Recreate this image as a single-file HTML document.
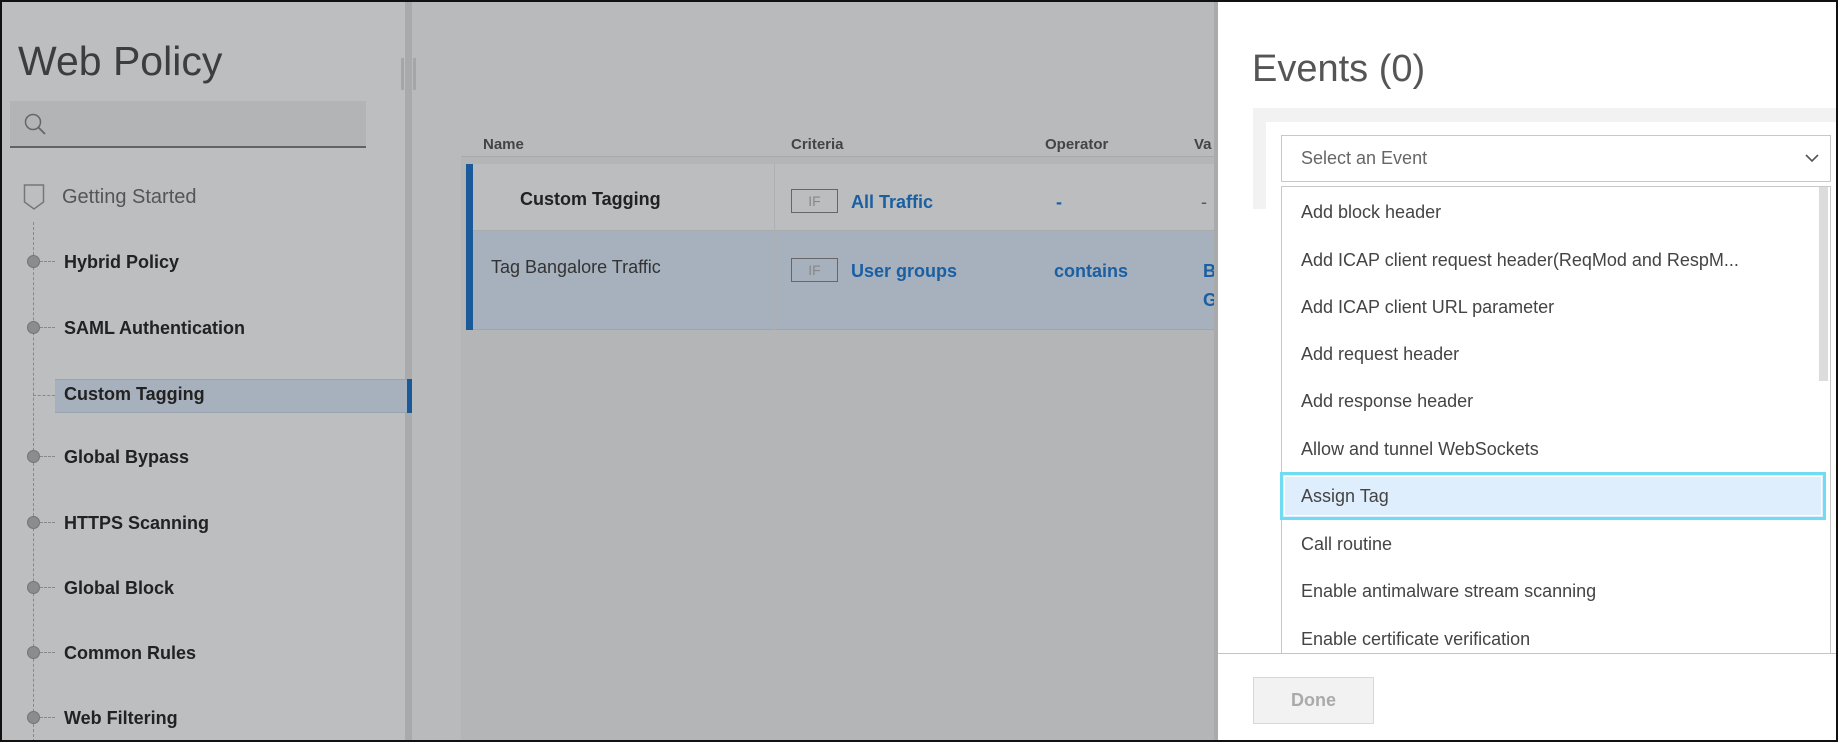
<!DOCTYPE html>
<html><head><meta charset="utf-8"><style>
*{margin:0;padding:0;box-sizing:border-box}
body{width:1838px;height:742px;overflow:hidden;position:relative;font-family:"Liberation Sans",sans-serif;background:#b9babb}
.a{position:absolute;white-space:nowrap}
.frame{position:absolute;left:0;top:0;width:1838px;height:742px;border:2px solid #111;z-index:50;pointer-events:none}
.item{font-size:18px;font-weight:bold;color:#222;left:64px}
.dot{position:absolute;left:27px;width:13px;height:13px;border-radius:50%;background:#8b8c8d;border:1px solid #747576}
.hd{position:absolute;left:40px;width:15px;border-top:1px dashed #888}
.li{position:absolute;left:1301px;font-size:18px;color:#444}
.th{position:absolute;top:136px;font-size:15px;font-weight:bold;color:#444}
.if{position:absolute;left:791px;width:47px;height:24px;border:1px solid #666;color:#888;font-size:14px;text-align:center;line-height:22px}
.bl{position:absolute;color:#1b5fa3;font-size:18px;font-weight:bold}
</style></head><body>
<div class="frame"></div>
<div class="a" style="left:0;top:0;width:405px;height:742px;background:#bdbebf"></div>
<div class="a" style="left:405px;top:0;width:7px;height:742px;background:#a9aaab"></div>
<div class="a" style="left:401px;top:58px;width:3px;height:32px;background:#a5a6a7"></div>
<div class="a" style="left:413px;top:58px;width:3px;height:32px;background:#a5a6a7"></div>
<div class="a" style="left:18px;top:38px;font-size:41px;color:#3c3d3e;font-weight:300">Web Policy</div>
<div class="a" style="left:10px;top:101px;width:356px;height:47px;background:#b3b4b5;border-bottom:2px solid #626364"></div>
<svg class="a" style="left:22px;top:111px" width="28" height="28" viewBox="0 0 28 28"><circle cx="11" cy="11" r="7.5" fill="none" stroke="#666" stroke-width="1.5"/><line x1="16.5" y1="16.5" x2="23" y2="23" stroke="#666" stroke-width="1.8"/></svg>
<div class="a" style="left:33px;top:222px;height:520px;border-left:1px dashed #888"></div>
<svg class="a" style="left:23px;top:183px" width="22" height="28" viewBox="0 0 22 28"><path d="M1.5 2 L20.5 2 L20.5 19 L11 26 L1.5 19 Z" fill="none" stroke="#777" stroke-width="1.5"/></svg>
<div class="a" style="left:62px;top:186px;font-size:20px;color:#555">Getting Started</div>
<div class="dot" style="top:255px"></div><div class="hd" style="top:261px"></div><div class="a item" style="top:252px">Hybrid Policy</div>
<div class="dot" style="top:321px"></div><div class="hd" style="top:327px"></div><div class="a item" style="top:318px">SAML Authentication</div>
<div class="a" style="left:33px;top:395px;width:22px;border-top:1px dashed #888"></div>
<div class="a" style="left:55px;top:379px;width:357px;height:34px;background:#a7b1bd;border-top:1px solid #9aa4b0;border-bottom:1px solid #9aa4b0"></div>
<div class="a" style="left:407px;top:379px;width:5px;height:34px;background:#1a5a9a"></div>
<div class="a item" style="top:384px">Custom Tagging</div>
<div class="dot" style="top:450px"></div><div class="hd" style="top:456px"></div><div class="a item" style="top:447px">Global Bypass</div>
<div class="dot" style="top:516px"></div><div class="hd" style="top:522px"></div><div class="a item" style="top:513px">HTTPS Scanning</div>
<div class="dot" style="top:581px"></div><div class="hd" style="top:587px"></div><div class="a item" style="top:578px">Global Block</div>
<div class="dot" style="top:646px"></div><div class="hd" style="top:652px"></div><div class="a item" style="top:643px">Common Rules</div>
<div class="dot" style="top:711px"></div><div class="hd" style="top:717px"></div><div class="a item" style="top:708px">Web Filtering</div>
<div class="a" style="left:461px;top:156px;width:757px;height:586px;background:#b4b5b6"></div>
<div class="th" style="left:483px">Name</div>
<div class="th" style="left:791px">Criteria</div>
<div class="th" style="left:1045px">Operator</div>
<div class="th" style="left:1194px">Va</div>
<div class="a" style="left:461px;top:156px;width:757px;height:1px;background:#a8a9aa"></div>
<div class="a" style="left:466px;top:164px;width:752px;height:67px;background:#bcbdbe;border-bottom:1px solid #aaabac"></div>
<div class="a" style="left:466px;top:231px;width:752px;height:99px;background:#a7b1bd;border-bottom:1px solid #9ea5ae"></div>
<div class="a" style="left:466px;top:164px;width:7px;height:166px;background:#1a5a9a"></div>
<div class="a" style="left:774px;top:164px;width:1px;height:166px;background:#aeb0b2"></div>
<div class="a" style="left:520px;top:189px;font-size:18px;font-weight:bold;color:#222">Custom Tagging</div>
<div class="a" style="left:491px;top:257px;font-size:18px;color:#333">Tag Bangalore Traffic</div>
<div class="if" style="top:189px">IF</div>
<div class="if" style="top:258px">IF</div>
<div class="bl" style="left:851px;top:192px">All Traffic</div>
<div class="bl" style="left:1056px;top:192px">-</div>
<div class="a" style="left:1201px;top:192px;font-size:18px;color:#555">-</div>
<div class="bl" style="left:851px;top:261px">User groups</div>
<div class="bl" style="left:1054px;top:261px">contains</div>
<div class="bl" style="left:1203px;top:261px">B</div>
<div class="bl" style="left:1203px;top:290px">G</div>
<div class="a" style="left:1214px;top:0;width:4px;height:742px;background:#a9aaab"></div>
<div class="a" style="left:1218px;top:0;width:620px;height:742px;background:#fff"></div>
<div class="a" style="left:1252px;top:48px;font-size:38px;color:#555;font-weight:300">Events (0)</div>
<div class="a" style="left:1253px;top:108px;width:585px;height:101px;background:#f2f2f2"></div>
<div class="a" style="left:1266px;top:122px;width:572px;height:87px;background:#fff"></div>
<div class="a" style="left:1281px;top:135px;width:550px;height:47px;border:1px solid #c8c8c8;background:#fff"></div>
<div class="a" style="left:1301px;top:148px;font-size:18px;color:#666">Select an Event</div>
<svg class="a" style="left:1804px;top:150px" width="16" height="16" viewBox="0 0 16 16"><path d="M2 5 L8 11 L14 5" fill="none" stroke="#555" stroke-width="1.6"/></svg>
<div class="a" style="left:1281px;top:186px;width:550px;height:467px;border:1px solid #c8c8c8;border-bottom:none;background:#fff"></div>
<div class="a" style="left:1819px;top:187px;width:9px;height:194px;background:#dcdcdc"></div>
<div class="a" style="left:1280px;top:472px;width:546px;height:48px;background:#dfeefc;border:3px solid #6fdcf4;outline:1px solid #fff;outline-offset:-5px"></div>
<div class="li" style="top:202px">Add block header</div>
<div class="li" style="top:250px">Add ICAP client request header(ReqMod and RespM...</div>
<div class="li" style="top:297px">Add ICAP client URL parameter</div>
<div class="li" style="top:344px">Add request header</div>
<div class="li" style="top:391px">Add response header</div>
<div class="li" style="top:439px">Allow and tunnel WebSockets</div>
<div class="li" style="top:486px">Assign Tag</div>
<div class="li" style="top:534px">Call routine</div>
<div class="li" style="top:581px">Enable antimalware stream scanning</div>
<div class="li" style="top:629px">Enable certificate verification</div>
<div class="a" style="left:1218px;top:653px;width:620px;height:89px;background:#fff;border-top:1px solid #c4c4c4"></div>
<div class="a" style="left:1253px;top:677px;width:121px;height:47px;background:#f2f2f2;border:1px solid #d8d8d8;text-align:center;line-height:45px;font-size:18px;font-weight:bold;color:#aaa">Done</div>
</body></html>
